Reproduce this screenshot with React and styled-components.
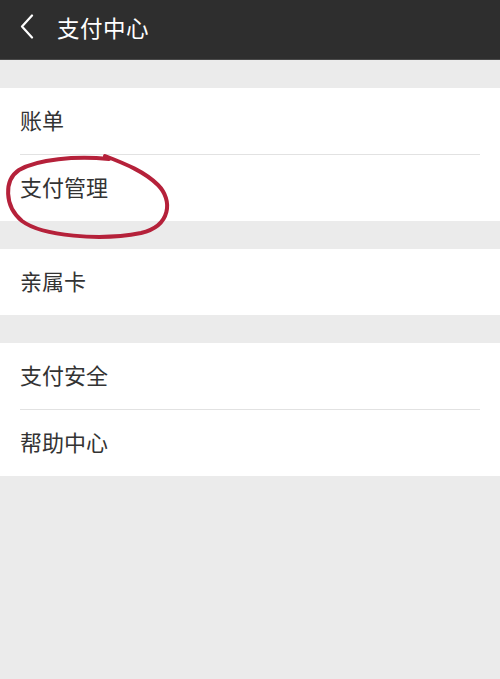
import React from "react";
import styled, { createGlobalStyle } from "styled-components";

const GlobalStyle = createGlobalStyle`
  html, body {
    margin: 0;
    padding: 0;
    background: #ebebeb;
  }
  body {
    font-family: "Noto Sans CJK SC", "Liberation Sans", sans-serif;
  }
`;

const Page = styled.div`
  width: 500px;
  min-height: 679px;
  background: #ebebeb;
`;

const Header = styled.div`
  height: 60px;
  background: #2e2e2e;
  border-bottom: 1px solid #4a4a4a;
  display: flex;
  align-items: center;
  padding: 0 0 5px 19px;
  box-sizing: border-box;
`;

const BackButton = styled.svg`
  width: 16px;
  height: 26px;
  display: block;
`;

const Title = styled.h1`
  margin: 0 0 0 22px;
  color: #ffffff;
  font-size: 22.5px;
  font-weight: 400;
  letter-spacing: 0.5px;
`;

const Group = styled.div`
  background: #ffffff;
  margin-top: 28px;
  padding-left: 20px;
`;

const Row = styled.div`
  position: relative;
  height: 66px;
  box-sizing: border-box;
  padding-bottom: 4px;
  display: flex;
  align-items: center;
  color: #333333;
  font-size: 22px;
  border-top: ${(props) => (props.$first ? "none" : "1px solid #e2e2e2")};
  margin-right: 20px;
  ${(props) => (props.$first ? "" : "height: 67px;")}
`;

const Circle = styled.svg`
  position: absolute;
  left: -20px;
  top: 0;
  width: 200px;
  height: 100px;
  overflow: visible;
  pointer-events: none;
`;

const groups = [
  ["账单", "支付管理"],
  ["亲属卡"],
  ["支付安全", "帮助中心"],
];

export default function App() {
  return (
    <Page>
      <GlobalStyle />
      <Header>
        <BackButton viewBox="0 0 16 26">
          <path
            d="M13 1.5 L3 12.5 L13 23.5"
            fill="none"
            stroke="#ffffff"
            strokeWidth="2.2"
            strokeLinecap="round"
            strokeLinejoin="round"
          />
        </BackButton>
        <Title>支付中心</Title>
      </Header>
      {groups.map((items, gi) => (
        <Group key={gi}>
          {items.map((label, i) => (
            <Row key={label} $first={i === 0}>
              {label}
              {label === "支付管理" && (
                <Circle viewBox="0 155 200 100">
                  <path
                    d="M109 159 C 75 156, 38 159, 19 170 C 4 180, 4 206, 22 221 C 42 236, 100 241, 141 233 C 171 226, 173 200, 158 185 C 145 172, 126 164, 105 156"
                    fill="none"
                    stroke="#b5213a"
                    strokeWidth="4"
                    strokeLinecap="round"
                  />
                </Circle>
              )}
            </Row>
          ))}
        </Group>
      ))}
    </Page>
  );
}
